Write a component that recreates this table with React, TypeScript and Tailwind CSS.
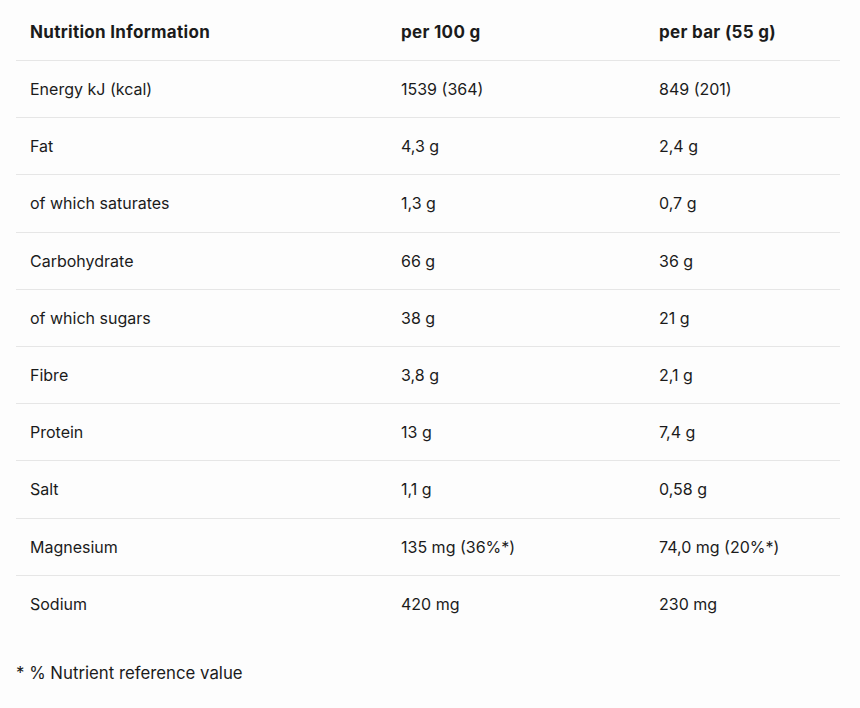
const rows: [string, string, string][] = [
  ["Energy kJ (kcal)", "1539 (364)", "849 (201)"],
  ["Fat", "4,3 g", "2,4 g"],
  ["of which saturates", "1,3 g", "0,7 g"],
  ["Carbohydrate", "66 g", "36 g"],
  ["of which sugars", "38 g", "21 g"],
  ["Fibre", "3,8 g", "2,1 g"],
  ["Protein", "13 g", "7,4 g"],
  ["Salt", "1,1 g", "0,58 g"],
  ["Magnesium", "135 mg (36%*)", "74,0 mg (20%*)"],
  ["Sodium", "420 mg", "230 mg"],
];

export default function App() {
  return (
    <div className="min-h-[708px] w-[860px] bg-[#fdfdfd] px-4 font-['Inter',sans-serif] text-[16px] text-[#1b1b1b]">
      <div className="w-[824px]">
        <div className="grid h-[61px] grid-cols-[371px_258px_195px] items-center border-b border-[#e6e6e6] pt-[6px] text-[17px] font-bold tracking-[0.3px]">
          <div className="pl-[14px]">Nutrition Information</div>
          <div className="pl-[14px]">per 100 g</div>
          <div className="pl-[14px]">per bar (55 g)</div>
        </div>
        {rows.map(([name, per100, perBar], i) => (
          <div
            key={name}
            className={
              i === rows.length - 1
                ? "grid h-[57.2px] grid-cols-[371px_258px_195px] items-center"
                : "grid h-[57.2px] grid-cols-[371px_258px_195px] items-center border-b border-[#e6e6e6]"
            }
          >
            <div className="pl-[14px]">{name}</div>
            <div className="pl-[14px]">{per100}</div>
            <div className="pl-[14px]">{perBar}</div>
          </div>
        ))}
      </div>
      <p className="pt-[28px] text-[16.8px]">* % Nutrient reference value</p>
    </div>
  );
}
